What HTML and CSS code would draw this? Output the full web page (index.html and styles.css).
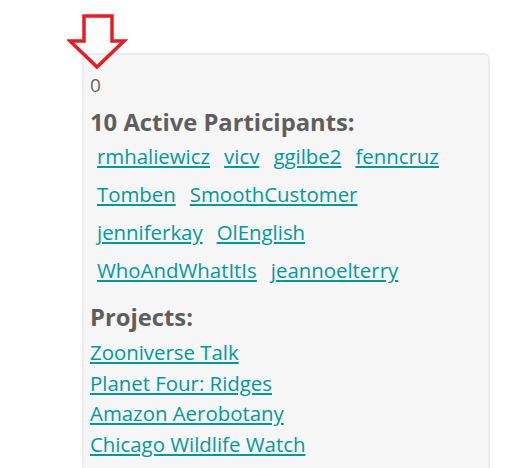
FILE: index.html
```html
<!DOCTYPE html>
<html lang="en">
<head>
  <meta charset="UTF-8">
  <title>Talk Stats</title>
  <link rel="stylesheet" href="styles.css">
</head>
<body>

<!-- Pointer arrow -->
<svg class="pointer" width="62" height="60" viewBox="0 0 62 60">
  <polygon points="17,4 45,4 45,29 57,29 30,55 3,29 17,29" fill="none" stroke="#e81c24" stroke-width="3.5" stroke-linejoin="miter"/>
</svg>

<div class="stats-box">
  <div class="count">0</div>

  <h3 class="first">10 Active Participants:</h3>
  <div class="participants">
    <a href="#">rmhaliewicz</a>
    <a href="#">vicv</a>
    <a href="#">ggilbe2</a>
    <a href="#">fenncruz</a>
    <a href="#">Tomben</a>
    <a href="#">SmoothCustomer</a>
    <a href="#">jenniferkay</a>
    <a href="#">OlEnglish</a>
    <a href="#">WhoAndWhatItIs</a>
    <a href="#">jeannoelterry</a>
  </div>

  <h3>Projects:</h3>
  <ul class="projects">
    <li><a href="#">Zooniverse Talk</a></li>
    <li><a href="#">Planet Four: Ridges</a></li>
    <li><a href="#">Amazon Aerobotany</a></li>
    <li><a href="#">Chicago Wildlife Watch</a></li>
  </ul>
</div>

</body>
</html>
```

FILE: styles.css
```css
body {
  margin: 0;
  background-color: white;
  font-family: "Open Sans", sans-serif;
  color: #666;
}

.pointer {
  position: absolute;
  left: 67px;
  top: 12px;
}

.stats-box {
  margin: 53px 0 0 82px;
  width: 392px;
  padding: 18px 6px 20px 6px;
  background-color: #f6f6f6;
  border: 2px solid #ececec;
  border-radius: 6px;
  min-height: 420px;
}

.count {
  font-size: 19px;
  line-height: 24px;
}

h3 {
  margin: 14px 0 0 0;
  font-size: 23.8px;
  font-weight: bold;
  color: #5e5e5e;
  line-height: 29px;
}

h3.first {
  margin-top: 11px;
}

.participants {
  display: flex;
  flex-wrap: wrap;
  column-gap: 14px;
  padding: 0 25px 0 7px;
}

.participants a {
  line-height: 38px;
}

a {
  color: #009a9e;
  font-size: 20.4px;
}

.projects {
  list-style: none;
  margin: 5px 0 0 0;
  padding: 0;
  font-size: 20.4px;
}

.projects li {
  line-height: 30.5px;
}
```
